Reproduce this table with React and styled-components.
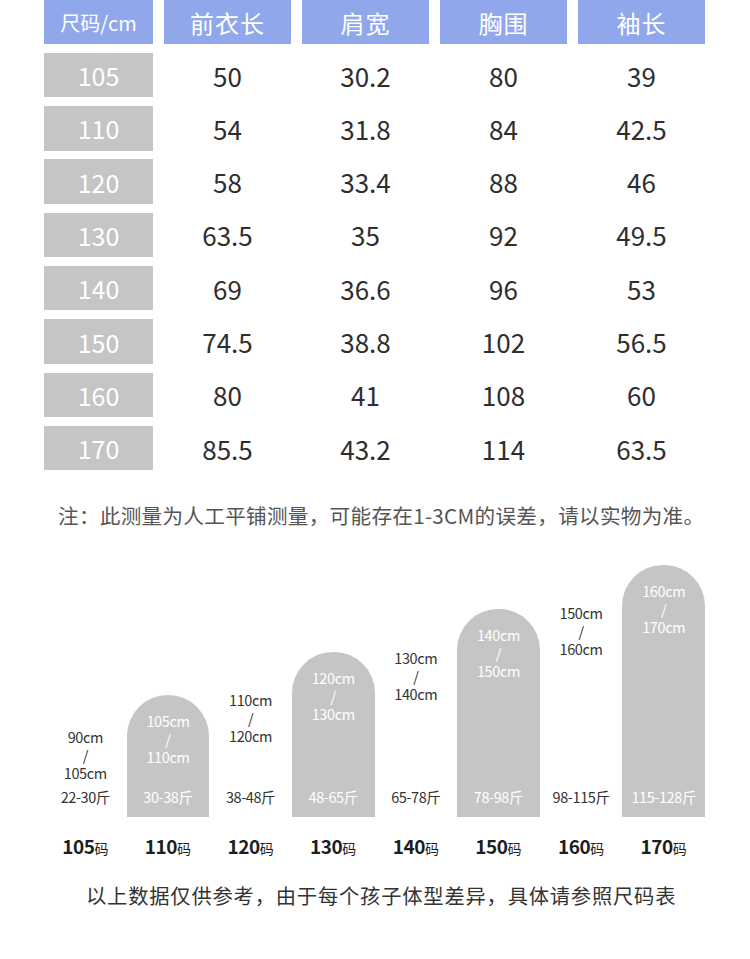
import styled, { createGlobalStyle } from "styled-components";

const GlobalStyle = createGlobalStyle`
  html, body {
    margin: 0;
    padding: 0;
    background: #fff;
  }
  body {
    font-family: "Noto Sans CJK SC", "Noto Sans", sans-serif;
    color: #333;
  }
`;

const sizeRows = [
  ["105", "50", "30.2", "80", "39"],
  ["110", "54", "31.8", "84", "42.5"],
  ["120", "58", "33.4", "88", "46"],
  ["130", "63.5", "35", "92", "49.5"],
  ["140", "69", "36.6", "96", "53"],
  ["150", "74.5", "38.8", "102", "56.5"],
  ["160", "80", "41", "108", "60"],
  ["170", "85.5", "43.2", "114", "63.5"],
];

const heightChart = [
  { size: "105", from: "90cm", to: "105cm", weight: "22-30斤", bar: 106, filled: false },
  { size: "110", from: "105cm", to: "110cm", weight: "30-38斤", bar: 122, filled: true },
  { size: "120", from: "110cm", to: "120cm", weight: "38-48斤", bar: 143, filled: false },
  { size: "130", from: "120cm", to: "130cm", weight: "48-65斤", bar: 165, filled: true },
  { size: "140", from: "130cm", to: "140cm", weight: "65-78斤", bar: 185, filled: false },
  { size: "150", from: "140cm", to: "150cm", weight: "78-98斤", bar: 208, filled: true },
  { size: "160", from: "150cm", to: "160cm", weight: "98-115斤", bar: 230, filled: false },
  { size: "170", from: "160cm", to: "170cm", weight: "115-128斤", bar: 252, filled: true },
];

const Page = styled.div`
  width: 750px;
  height: 959px;
  padding: 0 45px 0 44px;
  box-sizing: border-box;
  overflow: hidden;
`;

const Table = styled.div`
  display: grid;
  grid-template-columns: 109px repeat(4, 127px);
  grid-template-rows: 44px repeat(8, 44.5px);
  column-gap: 11px;
  row-gap: 8.8px;
`;

const HeadCell = styled.div`
  background: #91a7ec;
  color: #fff;
  display: flex;
  align-items: center;
  justify-content: center;
  font-size: ${(p) => (p.small ? "20px" : "24px")};
  letter-spacing: ${(p) => (p.small ? "0" : "1px")};
`;

const SizeCell = styled.div`
  background: #c5c5c5;
  color: #fff;
  display: flex;
  align-items: center;
  justify-content: center;
  font-size: 25px;
`;

const DataCell = styled.div`
  display: flex;
  align-items: center;
  justify-content: center;
  font-size: 26px;
  color: #2e2e2e;
`;

const Note = styled.p`
  margin: 30px 0 0 14px;
  font-size: 20.6px;
  line-height: 30px;
  letter-spacing: 0.3px;
  color: #555;
  white-space: nowrap;
`;

const Chart = styled.div`
  display: grid;
  grid-template-columns: repeat(8, 1fr);
  margin-top: 35px;
`;

const ChartColumn = styled.div`
  display: flex;
  flex-direction: column;
  align-items: stretch;
`;

const BarArea = styled.div`
  height: 252px;
  display: flex;
  flex-direction: column;
  justify-content: flex-end;
`;

const Bar = styled.div`
  height: ${(p) => p.h}px;
  background: ${(p) => (p.filled ? "#c5c5c5" : "transparent")};
  border-radius: ${(p) => (p.filled ? "41px 41px 0 0" : "0")};
  color: ${(p) => (p.filled ? "#fff" : "#333")};
  box-sizing: border-box;
  padding: 17px 0 11px;
  display: flex;
  flex-direction: column;
  justify-content: space-between;
  align-items: center;
  font-size: 14.5px;
  line-height: 18px;
  letter-spacing: -0.4px;
`;

const HeightText = styled.div`
  display: flex;
  flex-direction: column;
  align-items: center;
`;

const SizeLabel = styled.div`
  margin-top: 18px;
  text-align: center;
  line-height: 22px;
  font-size: 19px;
  font-weight: 700;
  color: #1e1e1e;
  letter-spacing: -0.5px;

  span {
    font-size: 14px;
    font-weight: 400;
    letter-spacing: 0;
  }
`;

const Footer = styled.p`
  margin: 21px 0 0;
  padding-left: 42px;
  font-size: 20.3px;
  line-height: 30px;
  letter-spacing: 0.8px;
  color: #333;
  white-space: nowrap;
`;

const headers = ["尺码/cm", "前衣长", "肩宽", "胸围", "袖长"];

export default function App() {
  return (
    <>
      <GlobalStyle />
      <Page>
        <Table>
          {headers.map((h, i) => (
            <HeadCell key={h} small={i === 0}>
              {h}
            </HeadCell>
          ))}
          {sizeRows.map((row) =>
            row.map((v, i) =>
              i === 0 ? (
                <SizeCell key={row[0] + i}>{v}</SizeCell>
              ) : (
                <DataCell key={row[0] + i}>{v}</DataCell>
              )
            )
          )}
        </Table>

        <Note>注：此测量为人工平铺测量，可能存在1-3CM的误差，请以实物为准。</Note>

        <Chart>
          {heightChart.map((c) => (
            <ChartColumn key={c.size}>
              <BarArea>
                <Bar h={c.bar} filled={c.filled}>
                  <HeightText>
                    <div>{c.from}</div>
                    <div>/</div>
                    <div>{c.to}</div>
                  </HeightText>
                  <div>{c.weight}</div>
                </Bar>
              </BarArea>
              <SizeLabel>
                {c.size}
                <span>码</span>
              </SizeLabel>
            </ChartColumn>
          ))}
        </Chart>

        <Footer>以上数据仅供参考，由于每个孩子体型差异，具体请参照尺码表</Footer>
      </Page>
    </>
  );
}
